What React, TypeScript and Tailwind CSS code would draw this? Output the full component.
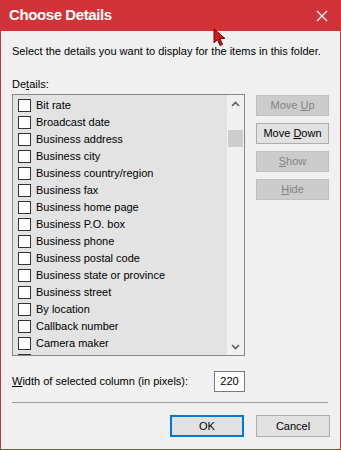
const items = [
  "Bit rate",
  "Broadcast date",
  "Business address",
  "Business city",
  "Business country/region",
  "Business fax",
  "Business home page",
  "Business P.O. box",
  "Business phone",
  "Business postal code",
  "Business state or province",
  "Business street",
  "By location",
  "Callback number",
  "Camera maker",
  "Camera model",
];

function SideButton({ label, u, rest, enabled }: { label?: string; u: string; rest: string; enabled?: boolean }) {
  return (
    <div
      className={
        "h-[21px] w-[73px] flex items-center justify-center border " +
        (enabled ? "bg-[#e1e1e1] border-[#adadad] text-black" : "bg-[#cccccc] border-[#bfbfbf] text-[#838383]")
      }
    >
      <span>
        {label}
        <span className="underline underline-offset-1">{u}</span>
        {rest}
      </span>
    </div>
  );
}

export default function App() {
  return (
    <div
      className="w-[341px] h-[450px] flex flex-col bg-[#f0f0f0] border-x border-b border-[#d13438] text-[11px] text-black relative"
      style={{ fontFamily: '"Liberation Sans", Arial, sans-serif' }}
    >
      {/* title bar */}
      <div className="h-[31px] bg-[#d13438] flex items-center justify-between pl-[8px] pr-[12px] shrink-0">
        <span className="text-white font-bold text-[15px] tracking-[-0.4px]">Choose Details</span>
        <svg width="12" height="12" viewBox="0 0 12 12">
          <path d="M1 1 L11 11 M11 1 L1 11" stroke="#fff" strokeWidth="1.2" />
        </svg>
      </div>

      <div className="flex flex-col px-[11px]">
        <div className="mt-[13px] h-[14px] leading-[14px]">
          Select the details you want to display for the items in this folder.
        </div>
        <div className="mt-[19px] h-[14px] leading-[14px]">
          De<span className="underline underline-offset-1">t</span>ails:
        </div>

        <div className="flex mt-[3px] gap-[11px]">
          {/* list */}
          <div className="w-[234px] h-[262px] border border-[#828790] bg-[#e3e3e3] flex overflow-hidden">
            <div className="flex-1 pt-[2px] overflow-hidden">
              {items.map((it) => (
                <div key={it} className="h-[17px] flex items-center pl-[5px] shrink-0">
                  <div className="w-[13px] h-[13px] border border-[#333333] bg-white shrink-0" />
                  <span className="ml-[5px] whitespace-nowrap">{it}</span>
                </div>
              ))}
            </div>
            <div className="w-[17px] h-full bg-[#f0f0f0] flex flex-col items-center">
              <div className="h-[17px] flex items-center justify-center">
                <svg width="9" height="6" viewBox="0 0 9 6">
                  <path d="M1 5 L4.5 1.5 L8 5" stroke="#606060" strokeWidth="1.6" fill="none" />
                </svg>
              </div>
              <div className="mt-[18px] w-[15px] h-[17px] bg-[#cdcdcd]" />
              <div className="flex-1" />
              <div className="h-[17px] flex items-center justify-center">
                <svg width="9" height="6" viewBox="0 0 9 6">
                  <path d="M1 1 L4.5 4.5 L8 1" stroke="#606060" strokeWidth="1.6" fill="none" />
                </svg>
              </div>
            </div>
          </div>

          {/* buttons */}
          <div className="flex flex-col gap-[7px] pt-[1px]">
            <SideButton label="Move " u="U" rest="p" />
            <SideButton label="Move " u="D" rest="own" enabled />
            <SideButton u="S" rest="how" />
            <SideButton u="H" rest="ide" />
          </div>
        </div>

        <div className="flex items-center mt-[15px] h-[21px]">
          <span className="w-[202px]">
            <span className="underline underline-offset-1">W</span>idth of selected column (in pixels):
          </span>
          <div className="w-[31px] h-[21px] border border-[#7a7a7a] bg-white flex items-center justify-center">
            220
          </div>
        </div>

        <div className="mt-[10px] w-[316px] h-px bg-[#a0a0a0]" />

        <div className="flex justify-end gap-[12px] mt-[12px] w-[318px]">
          <div className="h-[22px] w-[74px] flex items-center justify-center border-2 border-[#0078d7] bg-[#e1e1e1]">
            OK
          </div>
          <div className="h-[22px] w-[74px] flex items-center justify-center border border-[#adadad] bg-[#e1e1e1]">
            Cancel
          </div>
        </div>
      </div>

      {/* mouse pointer */}
      <svg className="absolute left-[212px] top-[28px]" width="14" height="19" viewBox="0 0 14 19">
        <path d="M1 1 L1 15 L4.5 11.5 L7 17.5 L9.5 16.5 L7 10.5 L12 10.5 Z" fill="#d01820" stroke="#7a0000" strokeWidth="1" strokeLinejoin="round" />
      </svg>
    </div>
  );
}
